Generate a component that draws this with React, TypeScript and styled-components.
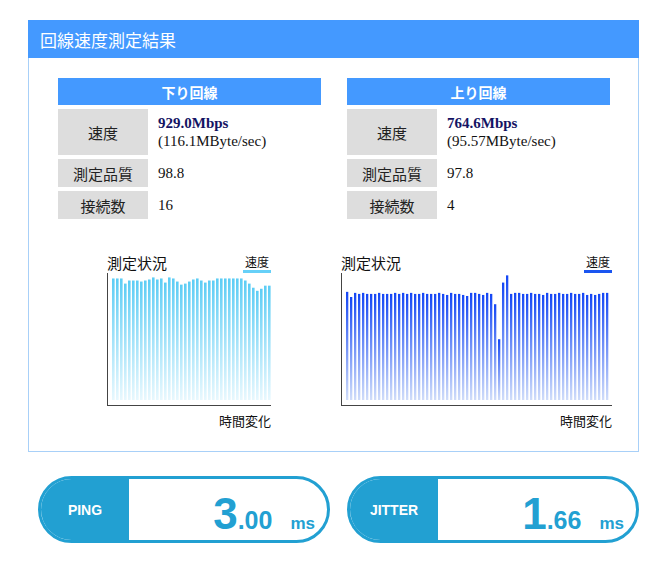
import React from "react";
import styled, { createGlobalStyle } from "styled-components";

const G = createGlobalStyle`
  body { margin: 0; background: #fff; font-family: "Noto Sans CJK JP", "Liberation Sans", sans-serif; }
`;
const Page = styled.div`width: 669px; padding: 20px 0 0 28px; box-sizing: border-box;`;
const Header = styled.div`
  width: 611px; height: 38px; background: #4499ff; color: #fff; font-size: 17px;
  display: flex; align-items: center; padding-left: 12px; box-sizing: border-box;
`;
const Panel = styled.div`
  width: 611px; height: 394px; border: 1px solid #a8d0f8; border-top: none; box-sizing: border-box;
  display: flex; flex-direction: column; padding: 20px 0 0 29px;
`;
const Tables = styled.div`display: flex; gap: 26px;`;
const Table = styled.div`width: 263px; display: flex; flex-direction: column; gap: 4px;`;
const THead = styled.div`
  height: 27px; background: #4499ff; color: #fff; font-size: 14px; font-weight: bold;
  display: flex; align-items: center; justify-content: center;
`;
const Row = styled.div<{ h: number }>`display: flex; gap: 4px; height: ${p => p.h}px;`;
const Label = styled.div`
  width: 90px; background: #dddddd; display: flex; align-items: center; justify-content: center;
  font-size: 15px; color: #222;
`;
const Val = styled.div`
  flex: 1; display: flex; flex-direction: column; justify-content: center; padding-left: 6px;
  font-family: "Liberation Serif", serif; font-size: 15px; color: #111; line-height: 18px;
`;
const Strong = styled.span`font-weight: bold; color: #141464;`;
const Charts = styled.div`display: flex; margin-top: 32px;`;
const Chart = styled.div<{ ml: number; w: number }>`
  margin-left: ${p => p.ml}px; width: ${p => p.w}px; position: relative; font-size: 15px; color: #111;
`;
const ChartTop = styled.div`display: flex; justify-content: space-between; align-items: flex-end; height: 22px;`;
const Legend = styled.div<{ c: string }>`
  font-size: 12px; border-bottom: 3px solid ${p => p.c}; padding: 0 2px 1px; line-height: 15px;
`;
const Axis = styled.div`border-left: 1px solid #444; border-bottom: 1px solid #444; height: 132px;`;
const XLab = styled.div`text-align: right; font-size: 13px; margin-top: 5px;`;
const Pills = styled.div`display: flex; gap: 17px; margin: 24px 0 0 10px;`;
const Pill = styled.div`
  width: 292px; height: 67px; border: 3px solid #22a0d2; border-radius: 34px; box-sizing: border-box;
  display: flex; overflow: hidden;
`;
const PillLab = styled.div`
  width: 88px; background: #22a0d2; color: #fff; font-family: "Liberation Sans", sans-serif;
  font-weight: bold; font-size: 14px; display: flex; align-items: center; justify-content: center;
`;
const PillVal = styled.div`
  flex: 1; display: flex; align-items: baseline; justify-content: flex-end; padding: 10px 12px 0 0;
  color: #22a0d2; font-family: "Liberation Sans", sans-serif; font-weight: bold;
`;
const Big = styled.span`font-size: 44px;`;
const Small = styled.span`font-size: 25px;`;
const Unit = styled.span`font-size: 17px; margin-left: 18px;`;

const leftH = [118,118,118,113,116,116,116,115,116,117,119,117,118,114,119,118,115,112,113,115,117,118,116,114,116,116,118,118,118,118,118,118,118,116,113,109,106,108,111,111];
const rightH = [105,100,104,103,104,103,103,103,104,103,103,103,104,103,104,103,104,103,103,104,103,103,103,104,103,102,104,103,103,102,101,104,104,103,102,104,103,93,59,114,121,103,104,104,103,103,104,103,103,102,104,103,103,104,103,103,104,103,103,104,102,103,102,103,104,104];

function Bars({ data, c1, c2, id, x0, step, w }: { data: number[]; c1: string; c2: string; id: string; x0: number; step: number; w: number }) {
  return (
    <svg width="300" height="132" style={{ position: "absolute", left: 0, top: 22 }}>
      <defs>
        <linearGradient id={id} x1="0" y1="0" x2="0" y2="1">
          <stop offset="0" stopColor={c1} />
          <stop offset="1" stopColor={c2} />
        </linearGradient>
      </defs>
      {data.map((h, i) => (
        <rect key={i} x={x0 + i * step} y={127 - h * 1.03} width={w} height={h * 1.03} fill={`url(#${id})`} />
      ))}
    </svg>
  );
}

export default function App() {
  return (
    <Page>
      <G />
      <Header>回線速度測定結果</Header>
      <Panel>
        <Tables>
          {[
            ["下り回線", "929.0Mbps", "(116.1MByte/sec)", "98.8", "16"],
            ["上り回線", "764.6Mbps", "(95.57MByte/sec)", "97.8", "4"],
          ].map(t => (
            <Table key={t[0]}>
              <THead>{t[0]}</THead>
              <Row h={46}><Label>速度</Label><Val><Strong>{t[1]}</Strong><span>{t[2]}</span></Val></Row>
              <Row h={28}><Label>測定品質</Label><Val>{t[3]}</Val></Row>
              <Row h={28}><Label>接続数</Label><Val>{t[4]}</Val></Row>
            </Table>
          ))}
        </Tables>
        <Charts>
          <Chart ml={49} w={164}>
            <ChartTop><span>測定状況</span><Legend c="#66d0f8">速度</Legend></ChartTop>
            <Axis />
            <Bars data={leftH} c1="#5ccdf5" c2="#e8f8fe" id="g1" x0={5} step={4} w={2.6} />
            <XLab>時間変化</XLab>
          </Chart>
          <Chart ml={70} w={271}>
            <ChartTop><span>測定状況</span><Legend c="#1a55f0">速度</Legend></ChartTop>
            <Axis />
            <Bars data={rightH} c1="#1446f5" c2="#d0ddfa" id="g2" x0={5} step={4} w={2.3} />
            <XLab>時間変化</XLab>
          </Chart>
        </Charts>
      </Panel>
      <Pills>
        <Pill><PillLab>PING</PillLab><PillVal><Big>3</Big><Small>.00</Small><Unit>ms</Unit></PillVal></Pill>
        <Pill><PillLab>JITTER</PillLab><PillVal><Big>1</Big><Small>.66</Small><Unit>ms</Unit></PillVal></Pill>
      </Pills>
    </Page>
  );
}
